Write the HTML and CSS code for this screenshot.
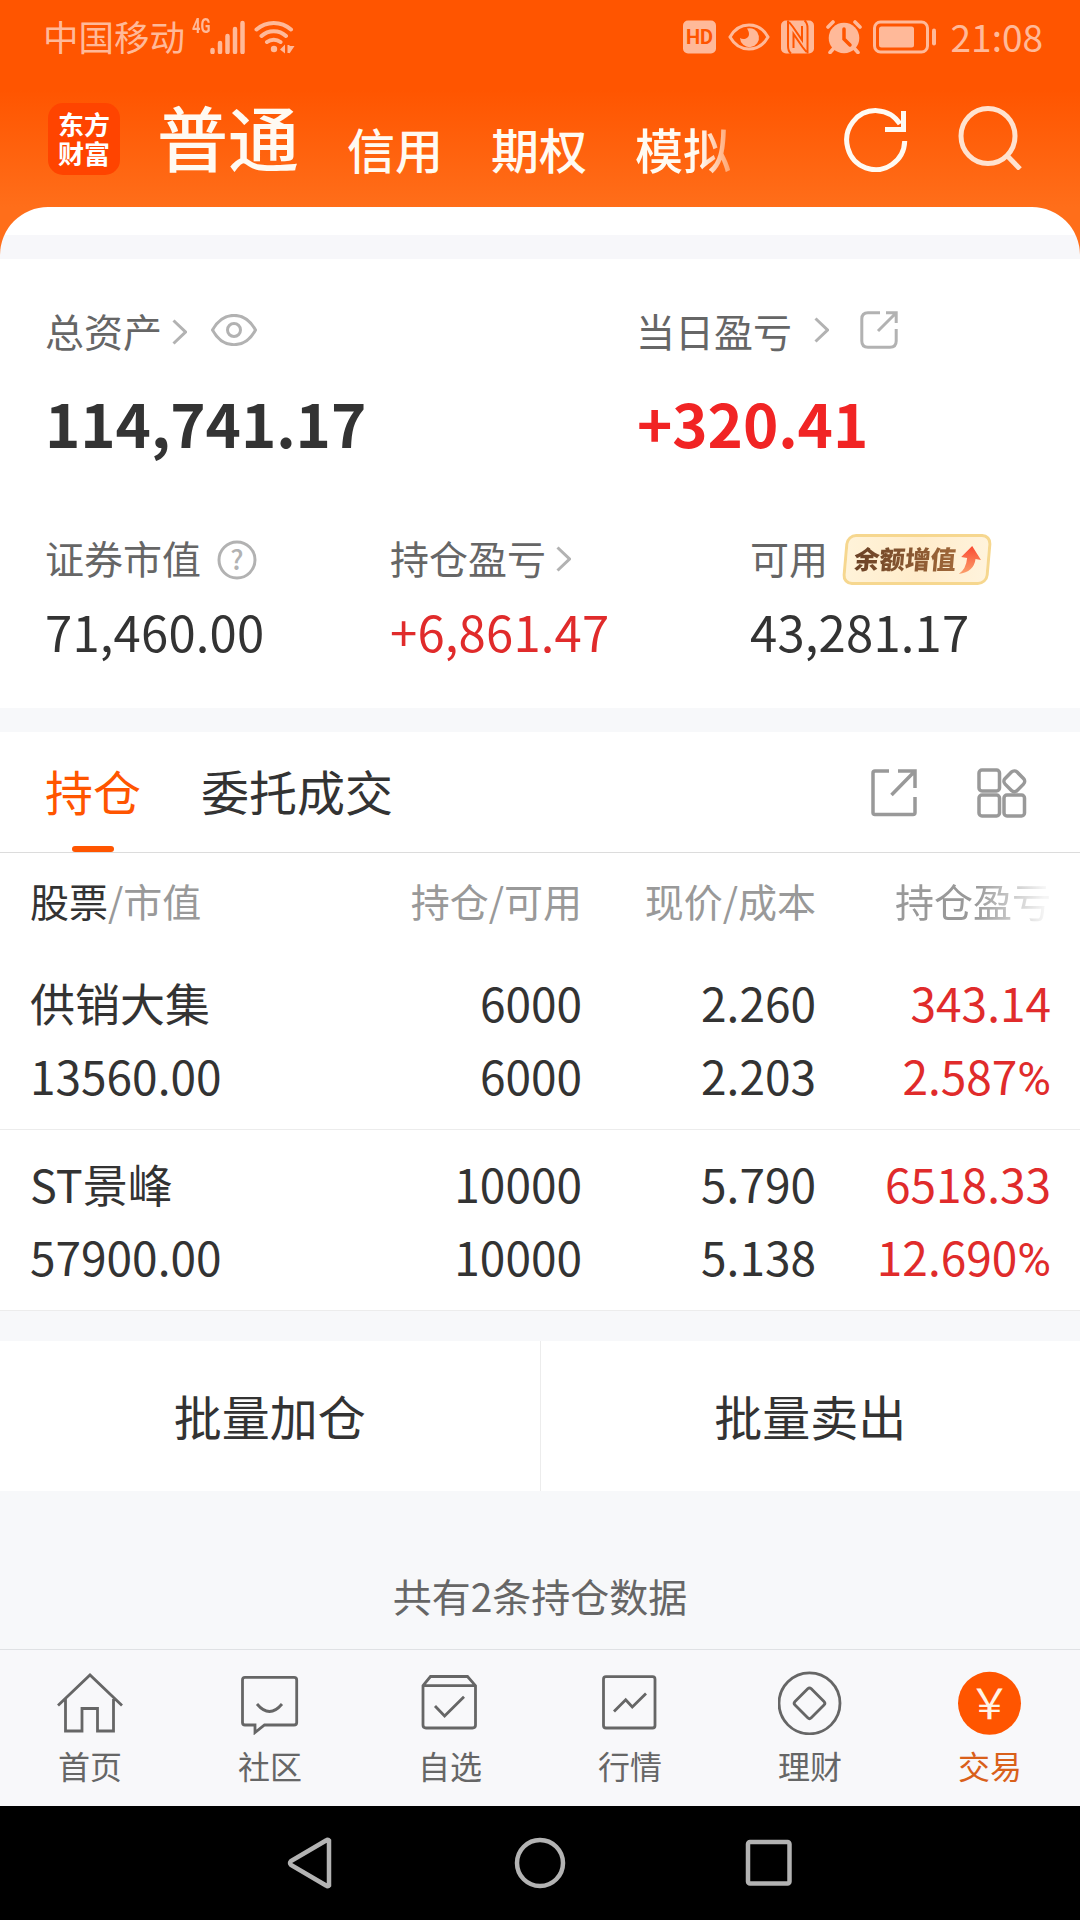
FILE: index.html
```html
<!doctype html>
<html lang="zh-CN">
<head>
    <meta charset="utf-8">
    <title>交易</title>
    <link rel="stylesheet" href="styles.css">
</head>
<body>
<div class="top">
    <div class="status">
        <span class="carrier">中国移动</span>
        <span class="net">4G</span>
        <svg class="signal" width="36" height="34" viewBox="0 0 36 34">
            <path d="M2.5 30v2M10 23v9M17.500 16v16M25 9v23M32.500 3v29"/>
        </svg>
        <svg class="wifi" width="41" height="34" viewBox="0 0 41 34">
            <path d="M2.500 9.500a26 26 0 0 1 34.500 0M7.500 16a18 18 0 0 1 24.500 0M13 22a11 11 0 0 1 13.500 0"/>
            <circle cx="20" cy="29" r="3.200"/>
            <path class="fill" d="M26 29.500l5-5v9zM34 26l6.500 0-5 7.500zM33.500 25h2v8h-2z"/>
        </svg>
        <div class="status-right">
            <svg width="34" height="34" viewBox="0 0 34 34">
                <rect x="0" y="0.500" width="33" height="33" rx="5" fill="#ffb999"/>
                <text class="hd" x="16.500" y="24" text-anchor="middle">HD</text>
            </svg>
            <svg width="42" height="34" viewBox="0 0 42 34">
                <path d="M2 17c9-16 29-16 38 0c-9 16-29 16-38 0z" fill="none" stroke="#ffb999" stroke-width="3"/>
                <path d="M19 8.500a9.500 9.500 0 1 1-7 9.500c3 2 9 1 9-4c0-2-1-4-2-5.500z" fill="#ffb999"/>
            </svg>
            <svg width="34" height="34" viewBox="0 0 34 34">
                <rect x="0" y="0.500" width="33" height="33" rx="5" fill="#ffb999"/>
                <path d="M7 .5V26q0 5 3 7.500M26.500 33.500V8q0-5-3-7.500M8 2l4 5 9 13V6M25.500 32l-4-5-9-13v14" fill="none" stroke="#ff5500" stroke-width="2"/>
            </svg>
            <svg width="36" height="34" viewBox="0 0 36 34">
                <circle cx="18" cy="18" r="15.300" fill="#ffb999"/>
                <path d="M2 7l5-5M34 7l-5-5M8 28l-4 4.500M28 28l4 4.500" stroke="#ffb999" stroke-width="3.600" stroke-linecap="round"/>
                <path d="M18 9v10l6 6" fill="none" stroke="#ff5500" stroke-width="3.500" stroke-linecap="round"/>
            </svg>
            <svg width="64" height="34" viewBox="0 0 64 34">
                <rect x="1.500" y="2" width="53" height="30" rx="6" fill="none" stroke="#ffb999" stroke-width="3"/>
                <rect x="6" y="6.500" width="35" height="21" rx="2.500" fill="#ffb999"/>
                <rect x="59" y="8.500" width="4" height="17" rx="2" fill="#ffb999"/>
            </svg>
            <span class="clock">21:08</span>
        </div>
    </div>
    <div class="header">
        <div class="logo"><span>东方</span><span>财富</span></div>
        <div class="accounts">
            <span class="account current">普通</span>
            <span class="account">信用</span>
            <span class="account">期权</span>
            <span class="account fade">模拟</span>
        </div>
        <svg class="refresh" width="64" height="64" viewBox="0 0 64 64">
            <path d="M60.700 33A29 29.500 0 1 1 56 16"/>
            <path d="M59.500 3v18.500H41"/>
        </svg>
        <svg class="search" width="64" height="64" viewBox="0 0 64 64">
            <ellipse cx="30" cy="30" rx="27" ry="27.500"/>
            <path d="M48.500 49L62 63"/>
        </svg>
    </div>
</div>

<div class="sheet"></div>

<div class="summary">
    <div class="totals">
        <div>
            <div class="label">总资产
                <svg class="chevron" width="15" height="26" viewBox="0 0 15 26"><path d="M1.500 1.500L13.500 13L1.500 24.500"/></svg>
                <svg class="eye" width="46" height="32" viewBox="0 0 46 32">
                    <path d="M1.500 16C12-3.500 34-3.500 44.500 16C34 35.500 12 35.500 1.500 16z"/>
                    <circle cx="23" cy="16" r="6.500"/>
                </svg>
            </div>
            <div class="total">114,741.17</div>
        </div>
        <div>
            <div class="label day">当日盈亏
                <svg class="chevron" width="15" height="26" viewBox="0 0 15 26"><path d="M1.500 1.500L13.500 13L1.500 24.500"/></svg>
                <svg class="share" width="38" height="38" viewBox="0 0 38 38">
                    <path d="M20 1.800H8q-6.200 0-6.200 6.200V30q0 6.200 6.200 6.200H30q6.200 0 6.200-6.200V18M26 1.800H36.200V12M36 2L18 20"/>
                </svg>
            </div>
            <div class="total profit red">+320.41</div>
        </div>
    </div>
    <div class="details">
        <div>
            <div class="label">证券市值
                <svg class="help" width="40" height="40" viewBox="0 0 40 40">
                    <circle cx="20" cy="20" r="18"/>
                    <text x="20" y="30" text-anchor="middle">?</text>
                </svg>
            </div>
            <div class="value">71,460.00</div>
        </div>
        <div>
            <div class="label">持仓盈亏
                <svg class="chevron near" width="15" height="26" viewBox="0 0 15 26"><path d="M1.500 1.500L13.500 13L1.500 24.500"/></svg>
            </div>
            <div class="value red">+6,861.47</div>
        </div>
        <div>
            <div class="label">可用
                <span class="badge"><span class="badge-text">余额增值</span><svg width="23" height="30" viewBox="0 0 23 30">
                    <defs>
                        <linearGradient id="up" x1="0" y1="0" x2="0" y2="1">
                            <stop offset="0" stop-color="#fa4a32"/>
                            <stop offset="1" stop-color="#fba06c"/>
                        </linearGradient>
                    </defs>
                    <path d="M12 1L22 15L16.500 14Q16 27 1 29Q8 24 8 13L2 12z" fill="url(#up)"/>
                </svg></span>
            </div>
            <div class="value">43,281.17</div>
        </div>
    </div>
</div>

<div class="tabs">
    <div class="tab active">持仓</div>
    <div class="tab">委托成交</div>
    <svg class="tab-icon" width="46" height="48" viewBox="0 0 46 48">
        <path d="M18 2H4Q2 2 2 4V43.500Q2 45.500 4 45.500H42Q44 45.500 44 43.500V28M27 2H44V19M43.500 2.500L20.500 26"/>
    </svg>
    <svg class="tab-icon" width="50" height="50" viewBox="0 0 50 50">
        <rect x="2" y="2" width="20.500" height="21" rx="3"/>
        <rect x="2" y="27" width="20.500" height="21" rx="3"/>
        <rect x="27" y="27" width="20.500" height="21" rx="3"/>
        <rect x="28.800" y="4.800" width="17" height="17" rx="4" transform="rotate(45 37.300 13.300)"/>
    </svg>
</div>

<div class="table">
    <div class="row head">
        <div><span class="dark">股票</span>/市值</div>
        <div>持仓/可用</div>
        <div>现价/成本</div>
        <div class="cut">持仓盈亏</div>
    </div>
    <div class="row">
        <div><span class="name">供销大集</span><br>13560.00</div>
        <div>6000<br>6000</div>
        <div>2.260<br>2.203</div>
        <div class="red">343.14<br>2.587<span class="pct">%</span></div>
    </div>
    <div class="row">
        <div><span class="name">ST景峰</span><br>57900.00</div>
        <div>10000<br>10000</div>
        <div>5.790<br>5.138</div>
        <div class="red">6518.33<br>12.690<span class="pct">%</span></div>
    </div>
</div>

<div class="batch">
    <div>批量加仓</div>
    <div>批量卖出</div>
</div>

<div class="count">共有2条持仓数据</div>

<div class="nav">
    <div class="nav-item">
        <svg width="66" height="64" viewBox="-1 0 66 64">
            <path d="M0 34.500L32 4L64 34.500M7.500 28V60H24V37.500H39.500V60H55.500V28"/>
        </svg>
        首页
    </div>
    <div class="nav-item">
        <svg width="64" height="64" viewBox="0 0 64 64">
            <path d="M7 6.300H56Q58.700 6.300 58.700 9V51.500Q58.700 54 56 54H26.500L17 61.500V54H7Q4.500 54 4.500 51.500V9Q4.500 6.300 7 6.300zM19 33Q31.500 48 44 33"/>
        </svg>
        社区
    </div>
    <div class="nav-item">
        <svg width="64" height="64" viewBox="0 0 64 64">
            <path d="M5 14.700L12.500 5.500H49.500L57.500 14.700V54Q57.500 57 54.500 57H8Q5 57 5 54zH57.500M17 35L26.600 45L46 25.700"/>
        </svg>
        自选
    </div>
    <div class="nav-item">
        <svg width="64" height="64" viewBox="0 0 64 64">
            <rect x="5.500" y="5.700" width="51.500" height="51.300" rx="2.500"/>
            <path d="M16 40.500L27.700 28.700L34.300 36L48 22.500"/>
        </svg>
        行情
    </div>
    <div class="nav-item">
        <svg width="64" height="64" viewBox="0 0 64 64">
            <circle cx="31.500" cy="32.300" r="30.500"/>
            <rect x="20" y="20.800" width="23" height="23" rx="2.500" transform="rotate(45 31.500 32.300)"/>
        </svg>
        理财
    </div>
    <div class="nav-item on">
        <svg width="64" height="64" viewBox="0 0 64 64">
            <circle cx="31.500" cy="32.300" r="31.500"/>
            <text x="31.500" y="48" text-anchor="middle">￥</text>
        </svg>
        交易
    </div>
</div>

<div class="keys">
    <svg width="48" height="52" viewBox="0 0 48 52"><path d="M42 3.500V48.500Q41 50 39 48.500L4 28Q2 26 4 24L39 3.500Q41 2 42 3.500z"/></svg>
    <svg width="52" height="52" viewBox="0 0 52 52"><circle cx="26" cy="26" r="23"/></svg>
    <svg width="48" height="52" viewBox="0 0 48 52"><rect x="3" y="5" width="41.500" height="41.500" rx="2"/></svg>
</div>
</body>
</html>
```

FILE: styles.css
```css
* {
    box-sizing: border-box;
}
body {
    margin: 0;
    width: 1080px;
    height: 1920px;
    overflow: hidden;
    display: flex;
    flex-direction: column;
    background-color: #f7f8fa;
    color: #333;
    font-family: "Noto Sans CJK SC", sans-serif;
}
svg {
    flex: none;
    fill: none;
}
.red {
    color: #e02b2b;
}

/* status bar and header */
.top {
    height: 259px;
    background: linear-gradient(#ff5500 90px, #ff6e1a 207px);
}
.status {
    display: flex;
    height: 73px;
    padding: 0 37px 0 43px;
    align-items: center;
    color: #ffb999;
}
.carrier {
    margin-top: -2px;
    font-size: 35.500px;
    line-height: 70px;
}
.net {
    margin: -21px 0 0 7px;
    width: 18px;
    font-family: Roboto, sans-serif;
    font-size: 21px;
    font-weight: 700;
    transform: scaleX(0.7);
    transform-origin: left;
}
.signal, .wifi {
    stroke: #ffb999;
    stroke-width: 4.500;
    stroke-linecap: round;
}
.wifi {
    margin-left: 8px;
    stroke-width: 4;
}
.wifi circle, .wifi .fill {
    fill: #ffb999;
    stroke: none;
}
.status-right {
    display: flex;
    margin-left: auto;
    align-items: center;
    gap: 11px;
}
.hd {
    fill: #ff5500;
    font-family: Roboto, sans-serif;
    font-size: 20px;
    font-weight: 700;
}
.clock {
    margin: -2px 0 0 3px;
    font-size: 37px;
    line-height: 70px;
}
.header {
    display: flex;
    height: 134px;
    padding: 30px 58px 0 48px;
}
.logo {
    display: flex;
    flex-direction: column;
    width: 72px;
    height: 72px;
    padding-top: 6px;
    border-radius: 15px;
    background-color: #ff4400;
    color: #fff;
    font-size: 26px;
    font-weight: 700;
    line-height: 29px;
    text-align: center;
}
.accounts {
    display: flex;
    flex: 1;
    align-items: baseline;
    margin: -18px 0 0 37px;
    gap: 48px;
    color: #fffaf2;
    white-space: nowrap;
}
.account {
    position: relative;
    top: 2px;
    font-size: 48px;
    font-weight: 500;
}
.account.current {
    top: -1px;
    font-size: 71px;
}
.fade {
    -webkit-mask-image: linear-gradient(to right, #000 68%, rgba(0, 0, 0, 0.4) 100%);
    mask-image: linear-gradient(to right, #000 68%, rgba(0, 0, 0, 0.4) 100%);
}
.refresh, .search {
    margin-top: 5px;
    stroke: #fffaf2;
    stroke-width: 5;
}
.search {
    margin: 3px 0 0 50px;
    stroke: #ffe2cf;
}
.sheet {
    height: 52px;
    margin-top: -52px;
    border-radius: 48px 48px 0 0;
    background: linear-gradient(#fff 28px, #f7f7fa 28px);
}

/* assets */
.summary {
    height: 449px;
    padding: 41px 0 0 45px;
    background-color: #fff;
}
.totals {
    display: grid;
    grid-template-columns: 591px 1fr;
}
.details {
    display: grid;
    grid-template-columns: 345px 360px 1fr;
    margin-top: 65px;
}
.label {
    display: flex;
    height: 60px;
    align-items: center;
    color: #666;
    font-size: 39px;
    line-height: 60px;
}
.label svg {
    stroke: #b2b2b2;
    stroke-width: 3;
}
.label .chevron {
    margin: 3px 0 0 10px;
}
.label .near {
    margin-left: 10px;
}
.label .eye {
    margin-left: 24px;
}
.day .chevron {
    margin: 0 0 0 22px;
}
.day .share {
    margin-left: 31px;
}
.help {
    margin: 6px 0 0 16px;
}
.help text {
    fill: #b2b2b2;
    stroke: none;
    font-size: 27px;
    font-weight: 500;
}
.total {
    margin-top: 22px;
    font-size: 60px;
    font-weight: 700;
    line-height: 80px;
    letter-spacing: -0.100px;
}
.profit {
    margin-left: 1px;
    color: #f12424;
}
.value {
    margin-top: 14px;
    font-size: 49px;
    line-height: 60px;
    letter-spacing: 0.200px;
}
.badge {
    display: flex;
    width: 146px;
    height: 51px;
    margin: 4px 0 0 16px;
    padding-left: 7px;
    align-items: center;
    border: 3px solid #f6d78f;
    border-radius: 10px;
    background: linear-gradient(to right, #fff3d9, #ffeccb 50%, #fff3dc);
    transform: skewX(-5deg);
}
.badge-text {
    margin-top: -3px;
    background: linear-gradient(to right, #6b4226, #a0683a);
    -webkit-background-clip: text;
    background-clip: text;
    color: transparent;
    font-size: 25.500px;
    font-weight: 900;
    line-height: 40px;
}
.badge svg {
    margin-left: 3px;
    stroke: none;
}

/* tabs */
.tabs {
    display: flex;
    height: 121px;
    margin-top: 24px;
    padding: 0 53px 0 45px;
    align-items: center;
    border-bottom: 1px solid #dcdcdc;
    background-color: #fff;
}
.tab {
    position: relative;
    height: 120px;
    margin-right: 60px;
    font-size: 48px;
    line-height: 117px;
}
.tab.active {
    color: #ff5500;
}
.tab.active::after {
    content: "";
    position: absolute;
    left: 27px;
    bottom: 0;
    width: 42px;
    height: 6px;
    border-radius: 3px;
    background-color: #ff5500;
}
.tab-icon {
    margin: 2px 0 0 60px;
    stroke: #999;
    stroke-width: 3.500;
}
.tab + .tab-icon {
    margin-left: auto;
}

/* holdings */
.table {
    background-color: #fff;
}
.row {
    display: grid;
    grid-template-columns: 240px 312px 234px 235px;
    height: 181px;
    padding: 17px 0 0 30px;
    border-bottom: 1px solid #ececec;
    font-size: 46px;
    line-height: 73px;
    text-align: right;
}
.row > div:first-child {
    text-align: left;
    white-space: nowrap;
}
.name {
    font-size: 45px;
}
.pct {
    font-family: Roboto, sans-serif;
}
.row.head {
    height: 96px;
    padding-top: 0;
    border: 0;
    color: #999;
    font-size: 39px;
    line-height: 94px;
}
.dark {
    color: #333;
}
.cut {
    -webkit-mask-image: linear-gradient(to right, #000 160px, rgba(0, 0, 0, 0.1) 228px);
    mask-image: linear-gradient(to right, #000 160px, rgba(0, 0, 0, 0.1) 228px);
}
.batch {
    display: flex;
    height: 150px;
    margin-top: 30px;
    background-color: #fff;
}
.batch div {
    flex: 1;
    font-size: 48px;
    line-height: 148px;
    text-align: center;
}
.batch div:first-child {
    border-right: 1px solid #ececec;
}
.count {
    height: 158px;
    padding-top: 74px;
    color: #666;
    font-size: 39px;
    line-height: 60px;
    text-align: center;
}

/* bottom bar */
.nav {
    display: flex;
    height: 157px;
    border-top: 1px solid #dfe1e4;
    background-color: #f8f8fa;
}
.nav-item {
    display: flex;
    flex: 1;
    flex-direction: column;
    align-items: center;
    padding-top: 21px;
    color: #666;
    font-size: 32px;
    line-height: 60px;
}
.nav-item svg {
    stroke: #666;
    stroke-width: 2.800;
}
.on {
    color: #d9601a;
}
.on circle {
    fill: #ff5500;
    stroke: none;
}
.on text {
    fill: #fff3e6;
    stroke: none;
    font-size: 42px;
}
.keys {
    display: flex;
    height: 114px;
    align-items: center;
    justify-content: center;
    gap: 179px;
    background-color: #000;
}
.keys svg {
    stroke: #b3b3b3;
    stroke-width: 4.500;
}
```
